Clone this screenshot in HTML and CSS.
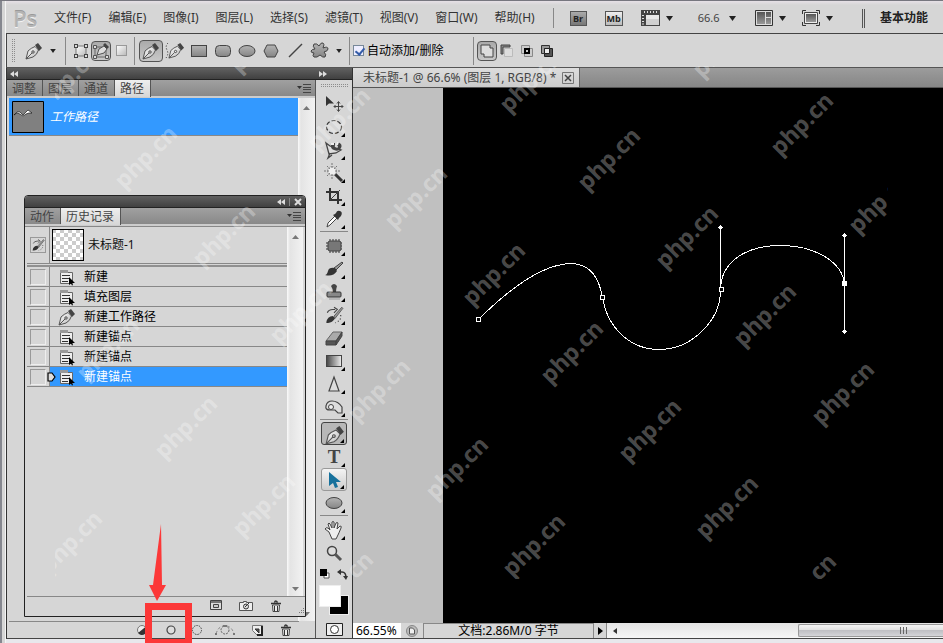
FILE: index.html
```html
<!DOCTYPE html>
<html lang="zh-CN">
<head>
<meta charset="utf-8">
<title>未标题-1</title>
<link rel="stylesheet" href="styles.css">
</head>
<body>
<svg class="defs" aria-hidden="true">
  <defs>
    <linearGradient id="g-fill" x1="0" y1="0" x2="0" y2="1"><stop offset="0" stop-color="#b4b4b4"/><stop offset="1" stop-color="#858585"/></linearGradient>
    <linearGradient id="g-light" x1="0" y1="0" x2="1" y2="1"><stop offset="0" stop-color="#fff"/><stop offset="1" stop-color="#b8b8b8"/></linearGradient>
    <linearGradient id="g-side"><stop offset="0" stop-color="#444"/><stop offset="1" stop-color="#eee"/></linearGradient>
    <linearGradient id="g-down" x1="0" y1="0" x2="0" y2="1"><stop offset="0" stop-color="#555"/><stop offset="1" stop-color="#999"/></linearGradient>
    <pattern id="checks" width="8" height="8" patternUnits="userSpaceOnUse"><rect width="8" height="8" fill="#fff"/><path d="M0 0h4v4H0zM4 4h4v4H4z" fill="#ccc"/></pattern>
    <symbol id="pen" viewBox="0 0 18 18">
      <path d="M1 17 3 9Q6 6 10 4.500l3.500 3.500Q12 13 8 15z" fill="url(#g-light)" stroke="#555"/>
      <path d="m10 3 3-2 4 5-3 3z" fill="#444"/><path d="m1 17 6-6" stroke="#555"/><circle cx="8" cy="10" r="1.200" fill="#eee" stroke="#444"/>
    </symbol>
    <symbol id="step" viewBox="0 0 18 18">
      <path d="M2.500 2.500h7v2h5v11h-12z" fill="#eee" stroke="#666"/><path d="M2 2h8v3H2z" fill="#999"/><path d="M4 7.500h8M4 10.500h8M4 13.500h6" stroke="#333"/>
      <path d="M11 9v8l2-1.500 1 2 1-.5-1-2h3z" fill="#000"/>
    </symbol>
    <symbol id="trash" viewBox="0 0 12 12"><path d="M2.500 5h7l-.5 6.500H3z" fill="#eee" stroke="#444"/><path d="M4.500 2.500q1-3 3 0M1 3.500h10" fill="none" stroke="#333" stroke-width="1.500"/><path d="M4.500 6v5M7.500 6v5" stroke="#333"/></symbol>
    <symbol id="panelmenu" viewBox="0 0 14 9"><path d="M0 2h5L2.500 5z" fill="#333"/><path d="M6 .5h8M6 3.500h8M6 5.500h8M6 8.500h8" stroke="#444"/></symbol>
    <symbol id="left2" viewBox="0 0 8 6"><path d="M4 0v6L0 3zM8 0v6L4 3z" fill="#ddd"/></symbol>
    <symbol id="right2" viewBox="0 0 8 6"><path d="M0 0v6l4-3zM4 0v6l4-3z" fill="#ddd"/></symbol>
    <symbol id="caret" viewBox="0 0 7 5"><path d="M0 0h7L3.500 5z" fill="#222"/></symbol>
    <symbol id="up" viewBox="0 0 7 4"><path d="M0 4h7L3.500 0z" fill="#777"/></symbol>
    <symbol id="brushhistory" viewBox="0 0 18 18"><path d="M3 7Q4 4 8 4h2M9 2l3 2-3 3" fill="none" stroke="#444"/><path d="M2 16q1-6 6-6l2 2q-3 5-8 4z" fill="#333"/><path d="m9 10 7-8 1 1-7 9z" fill="#999" stroke="#555" stroke-width=".8"/><path d="M15 9q1 5-5 7" fill="none" stroke="#333" stroke-dasharray="1 2"/></symbol>
  </defs>
</svg>

<div class="app">
  <header class="menubar">
    <strong class="logo">Ps</strong>
    <nav class="menus">
      <button>文件(F)</button><button>编辑(E)</button><button>图像(I)</button><button>图层(L)</button><button>选择(S)</button><button>滤镜(T)</button><button>视图(V)</button><button>窗口(W)</button><button>帮助(H)</button>
    </nav>
    <div class="appbar">
      <button class="badge bridge">Br</button>
      <button class="badge mini">Mb</button>
      <button class="drop" aria-label="查看额外内容"><svg width="19" height="16" viewBox="0 0 19 16"><path d="M0 0h19v16H0z" fill="#444"/><path d="M5 5h13v10H5z" fill="#d0d0d0"/><path d="M5 5h13v4H5z" fill="#e8e8e8"/><path d="M3.500 1v2M6.500 1v2M9.500 1v2M12.500 1v2M15.500 1v2M1 5.500h2M1 8.500h2M1 11.500h2M1 14h2" stroke="#ddd"/></svg><svg class="caret"><use href="#caret"/></svg></button>
      <button class="drop level">66.6 <svg class="caret"><use href="#caret"/></svg></button>
      <button class="drop near" aria-label="排列文档"><svg width="18" height="16" viewBox="0 0 18 16"><path d="M.5.5h17v15H.5z" fill="#ddd" stroke="#333"/><path d="M2 2h8v12H2zM11 2h5v5h-5zM11 8h5v6h-5z" fill="url(#g-down)"/></svg><svg class="caret"><use href="#caret"/></svg></button>
      <button class="drop" aria-label="屏幕模式"><svg width="18" height="16" viewBox="0 0 18 16"><path d="M.5 4V.5H4M14 .5h3.500V4M.5 12v3.500H4M14 15.500h3.500V12" fill="none" stroke="#333"/><path d="M2.500 2.500h13v11h-13z" fill="#eee" stroke="#444"/><path d="M4 4h10v8H4z" fill="url(#g-down)"/></svg><svg class="caret"><use href="#caret"/></svg></button>
    </div>
    <button class="workspace">基本功能</button>
  </header>

  <div class="options">
    <span class="grip tall"></span>
    <button class="preset" aria-label="钢笔工具预设"><svg width="18" height="18"><use href="#pen"/></svg><svg class="caret small"><use href="#caret"/></svg></button>
    <div class="group modes">
      <button aria-label="形状图层"><svg width="14" height="14" viewBox="0 0 14 14"><path d="M2 2h10v10H2z" fill="url(#g-light)" stroke="#777"/><path d="M0 0h4v4H0zM10 0h4v4h-4zM0 10h4v4H0zM10 10h4v4h-4z" fill="#444"/><path d="M1 1h2v2H1zM11 1h2v2h-2zM1 11h2v2H1zM11 11h2v2h-2z" fill="#ddd"/></svg></button>
      <button class="on" aria-label="路径"><svg width="16" height="16" viewBox="0 0 16 16"><path d="M2 4h11v10H2zM3 13 13 4" fill="none" stroke="#666"/><path d="M.5 2.500h3v3h-3zM.5 12.500h3v3h-3zM12.500 12.500h3v3h-3z" fill="#ddd" stroke="#555"/><path d="m4 12 2-6 5-3 3 3-3 4z" fill="#ddd" stroke="#555"/><path d="m10 2 2-2 4 4-2 2z" fill="#444"/></svg></button>
      <button aria-label="填充像素"><svg width="11" height="11"><rect x=".5" y=".5" width="10" height="10" fill="url(#g-light)" stroke="#999"/></svg></button>
    </div>
    <div class="group shapes">
      <button class="on" aria-label="钢笔"><svg width="18" height="18"><use href="#pen"/></svg></button>
      <button aria-label="自由钢笔"><svg width="20" height="18" viewBox="0 0 20 18"><path d="M3 1Q0 4 2 8T1 16" fill="none" stroke="#222" stroke-dasharray="1 2"/><svg x="3" width="17" height="17"><use href="#pen"/></svg></svg></button>
      <button aria-label="矩形"><svg width="16" height="14"><rect x=".5" y="1.500" width="15" height="11" fill="url(#g-fill)" stroke="#444"/></svg></button>
      <button aria-label="圆角矩形"><svg width="16" height="14"><rect x=".5" y="1.500" width="15" height="11" rx="4" fill="url(#g-fill)" stroke="#444"/></svg></button>
      <button aria-label="椭圆"><svg width="18" height="14"><ellipse cx="9" cy="7" rx="8" ry="5.500" fill="url(#g-fill)" stroke="#444"/></svg></button>
      <button aria-label="多边形"><svg width="16" height="14"><path d="M4 1h8l3 6-3 6H4L1 7z" fill="url(#g-fill)" stroke="#444"/></svg></button>
      <button aria-label="直线"><svg width="15" height="15"><path d="M1 14 14 1" stroke="#444" stroke-width="1.500"/></svg></button>
      <button aria-label="自定形状"><svg width="19" height="17"><path d="M4 2q3-1 5 2 2-4 4-3 2 1 0 5 5-2 5 1 0 2-4 3 3 3 1 5-2 1-5-2-3 3-6 2-2-1 0-4-3 0-3-2 1-2 4-2-3-3-1-5z" fill="url(#g-fill)" stroke="#444"/></svg></button>
      <svg class="caret small"><use href="#caret"/></svg>
    </div>
    <label class="auto"><input type="checkbox" checked>自动添加/删除</label>
    <div class="group modes areas">
      <button class="on" aria-label="添加到路径区域"><svg width="14" height="14"><path d="M1 1h9v3h3v9H4v-3H1z" fill="#ddd" stroke="#444"/></svg></button>
      <button aria-label="从路径区域减去"><svg width="14" height="14"><path d="M4.500 4.500h8v8h-8z" fill="#ddd" stroke="#bbb"/><path d="M1 1h9v2H3v7H1z" fill="#888" stroke="#444"/></svg></button>
      <button aria-label="交叉路径区域"><svg width="14" height="14"><path d="M1.500 1.500h8v8h-8zM4.500 4.500h8v8h-8z" fill="#ccc" stroke="#888"/><path d="M5 5h4v4H5z" fill="#ccc" stroke="#000" stroke-width="2"/></svg></button>
      <button aria-label="重叠路径区域除外"><svg width="14" height="14"><path d="M1.500 1.500h8v8h-8z" fill="#999" stroke="#333"/><path d="M4.500 4.500h8v8h-8z" fill="#555" stroke="#222"/><path d="M4.500 4.500h5v5h-5z" fill="#eee" stroke="#222"/></svg></button>
    </div>
  </div>

  <main class="work">
    <aside class="dock">
      <div class="dockbar"><svg class="dbl"><use href="#left2"/></svg></div>
      <div class="tabs"><button>调整</button><button>图层</button><button>通道</button><button class="on">路径</button><svg class="pm"><use href="#panelmenu"/></svg></div>
      <div class="body">
        <div class="list">
          <div class="pathrow"><svg width="32" height="32" viewBox="0 0 32 32"><path d="M.5.500h31v31H.5z" fill="#808080" stroke="#000"/><path d="m2 14 3-3 3 0 3 3 3-3 2-2 4 3-3 0-3 1-3 2-3-2-3-1z" fill="#fff" stroke="#000" stroke-width=".6"/></svg><em>工作路径</em></div>
        </div>
        <div class="scroll"><svg class="arrow"><use href="#up"/></svg><svg class="arrow flip"><use href="#up"/></svg></div>
      </div>
      <div class="foot pathfoot">
        <button aria-label="用前景色填充路径"><svg width="12" height="12"><circle cx="6" cy="6" r="4.500" fill="#eee" stroke="#777"/><path d="M10 2.500A5 5 0 1 1 2 9z" fill="#333"/></svg></button>
        <button aria-label="用画笔描边路径"><svg width="12" height="12"><circle cx="6" cy="6" r="4" fill="#ddd" stroke="#444" stroke-width="1.200"/></svg></button>
        <button aria-label="将路径作为选区载入"><svg width="12" height="12"><circle cx="6" cy="6" r="4.500" fill="none" stroke="#444" stroke-dasharray="1.500 1"/></svg></button>
        <button aria-label="从选区生成工作路径"><svg width="20" height="12"><circle cx="10" cy="6" r="4" fill="none" stroke="#666" stroke-dasharray="2 1"/><path d="M1 10Q3 3 8 2M12 2q5 1 7 8" fill="none" stroke="#888" stroke-dasharray="3 2"/><path d="M0 9h2v2H0zM18 9h2v2h-2zM8 1h4v2H8z" fill="#777"/></svg></button>
        <button aria-label="创建新路径"><svg width="11" height="11"><path d="M.5.500h10v10h-5l-5-5z" fill="#eee" stroke="#777"/><path d="M10 1v9H5" fill="none" stroke="#222" stroke-width="2"/><path d="M3 4h4v4z" fill="#555" stroke="#333"/></svg></button>
        <button aria-label="删除路径"><svg width="12" height="12"><use href="#trash"/></svg></button>
      </div>

      <section class="float">
        <div class="dockbar"><svg class="dbl"><use href="#left2"/></svg><i class="tick"></i><svg class="x" width="8" height="8" viewBox="0 0 8 8"><path d="m1 1 6 6M7 1 1 7" stroke="#ddd" stroke-width="2"/></svg></div>
        <div class="tabs"><button>动作</button><button class="on">历史记录</button><svg class="pm"><use href="#panelmenu"/></svg></div>
        <div class="body">
          <div class="list">
            <div class="snap"><span class="cell"><svg width="16" height="16" class="source"><use href="#brushhistory"/></svg></span><svg width="32" height="32"><rect x=".5" y=".5" width="31" height="31" fill="url(#checks)" stroke="#000"/></svg><span>未标题-1</span></div>
            <ol class="steps">
              <li><span class="cell"><i></i></span><svg><use href="#step"/></svg>新建</li>
              <li><span class="cell"><i></i></span><svg><use href="#step"/></svg>填充图层</li>
              <li><span class="cell"><i></i></span><svg><use href="#pen"/></svg>新建工作路径</li>
              <li><span class="cell"><i></i></span><svg><use href="#step"/></svg>新建锚点</li>
              <li><span class="cell"><i></i></span><svg><use href="#step"/></svg>新建锚点</li>
              <li class="now"><span class="cell"><i></i><svg class="marker" viewBox="0 0 9 10"><path d="M1 1h4l3 4-3 4H1z" fill="#ddd" stroke="#000" stroke-width="1.200"/></svg></span><svg><use href="#step"/></svg>新建锚点</li>
            </ol>
          </div>
          <div class="scroll"><svg class="arrow"><use href="#up"/></svg><svg class="arrow flip"><use href="#up"/></svg></div>
        </div>
        <div class="foot histfoot">
          <button aria-label="从当前状态创建新文档"><svg width="12" height="11"><path d="M.5.500h11v9H.5z" fill="#ddd" stroke="#444"/><path d="M1 2h10" stroke="#777" stroke-width="2"/><path d="M3.500 4.500h5v3h-5z" fill="#ccc" stroke="#444"/></svg></button>
          <button aria-label="创建新快照"><svg width="14" height="12"><path d="M.5 2.500h4v-1h3v1h6v8H.5z" fill="#eee" stroke="#555"/><circle cx="7" cy="6.500" r="2.500" fill="#ddd" stroke="#333"/><path d="m6 7 4-4" stroke="#333"/></svg></button>
          <button aria-label="删除当前状态"><svg width="12" height="12"><use href="#trash"/></svg></button>
          <svg class="resize" width="10" height="10"><path d="M8.500 0v10M6.500 3v7M4.500 5v5M2.500 7v3M.5 9v1" stroke="#777" stroke-dasharray="1 1"/></svg>
        </div>
      </section>

      <svg class="pointer" width="48" height="124" viewBox="0 0 48 124" aria-hidden="true"><path d="M16 1 17 62h4L12 78 4 62h4z" fill="#fc3838"/><path d="M3.500 83.500h40v36h-40z" fill="none" stroke="#fc3838" stroke-width="7"/></svg>
    </aside>

    <aside class="toolbox">
      <div class="dockbar"><svg class="dbl"><use href="#right2"/></svg></div>
      <span class="grip wide"></span>
      <div class="tools">
        <button class="plain" aria-label="移动"><svg viewBox="0 0 20 20"><path d="M2 2v10l3-2.500 5 0z" fill="#333"/><path d="M14.500 8v9M10 12.500h9M13 9.500l1.500-2 1.500 2M13 15.500l1.500 2 1.500-2M11.500 11 10 12.500l1.500 1.500M17.500 11l1.500 1.500-1.500 1.500" fill="none" stroke="#444"/></svg></button>
        <button aria-label="椭圆选框"><svg viewBox="0 0 20 20"><ellipse cx="10" cy="10" rx="7.500" ry="6.500" fill="none" stroke="#333" stroke-width="1.200" stroke-dasharray="4 2"/></svg></button>
        <button aria-label="磁性套索"><svg viewBox="0 0 20 20"><path d="m2 3 4 3 11 4-5 3-7 1zM6 13l-2 5 4-3" fill="#ddd" stroke="#444" stroke-width="1.300"/><path d="M7 3h4v2q-1 3 2 3 2-1 0-3l1-3q5 2 3 6-2 4-7 2-4-1-3-7z" fill="#444"/><path d="M7 3h3v2H7zM13 2h2l-1 3h-2z" fill="#eee"/></svg></button>
        <button aria-label="魔棒"><svg viewBox="0 0 20 20"><path d="m11 11 7 7" stroke="#333" stroke-width="3"/><circle cx="8" cy="8" r="4.500" fill="#eee" stroke="#aaa"/><path d="M8 0v5M8 11v5M0 8h5M11 8h5M3 3l3 3M13 3l-3 3M3 13l3-3" stroke="#777" stroke-dasharray="2 1"/></svg></button>
        <button aria-label="裁剪"><svg viewBox="0 0 20 20"><path d="M6 2v12h12M2 6h12v12" fill="none" stroke="#333" stroke-width="2"/><path d="M6 14 16 4" stroke="#444"/></svg></button>
        <button aria-label="吸管"><svg viewBox="0 0 20 20"><path d="m3 18 1-4 7-7 2 2-7 7z" fill="#fff" stroke="#444"/><path d="m9 6 5 5 1-2 2-2q2-4-1-5t-4 2l-1 1z" fill="#333"/></svg></button>
        <hr>
        <button aria-label="修复画笔"><svg viewBox="0 0 20 20"><path d="M6 3v14M9 3v14M12 3v14M15 3v14M2 7h16M2 10h16M2 13h16" stroke="#333"/><rect x="4" y="5" width="13" height="10" rx="2" fill="#777" stroke="#444"/></svg></button>
        <button aria-label="画笔"><svg viewBox="0 0 20 20"><path d="m10 9 8-6 1 1-7 7z" fill="#999" stroke="#444"/><path d="M1 16q2 0 3-4t7-3l2 3q-4 6-12 4z" fill="#333"/></svg></button>
        <button aria-label="仿制图章"><svg viewBox="0 0 20 20"><path d="M7 4q3-4 6 0-1 3-1 6H9q0-3-2-6z" fill="#444"/><rect x="3" y="10" width="14" height="5" rx="1" fill="#888" stroke="#333"/><path d="M5 17h11" stroke="#999"/></svg></button>
        <button aria-label="历史记录画笔"><svg viewBox="0 0 18 18"><use href="#brushhistory"/></svg></button>
        <button aria-label="橡皮擦"><svg viewBox="0 0 20 20"><path d="m2 13 7-9h9l-6 9z" fill="#aaa" stroke="#666"/><path d="M2 13h10v4H2zM12 13l6-9v4l-6 9z" fill="#555" stroke="#444"/></svg></button>
        <button aria-label="渐变"><svg viewBox="0 0 20 20"><rect x="2.500" y="4.500" width="15" height="11" fill="url(#g-side)" stroke="#444"/></svg></button>
        <button aria-label="锐化"><svg viewBox="0 0 20 20"><path d="m10 3 5 14H5z" fill="#ddd" stroke="#444" stroke-width="1.200"/></svg></button>
        <button aria-label="海绵"><svg viewBox="0 0 20 20"><path d="M2 9q1-5 6-5 6 0 10 6l0 6h-4l-3-3H6q-5 0-4-4z" fill="#ddd" stroke="#444" stroke-width="1.200"/><circle cx="7" cy="10" r="2.500" fill="#eee" stroke="#444"/></svg></button>
        <hr>
        <button class="pressed" aria-label="钢笔"><svg viewBox="0 0 20 20"><svg x="1" y="1" width="18" height="18"><use href="#pen"/></svg></svg></button>
        <button class="type">T</button>
        <button class="hover" aria-label="直接选择"><svg viewBox="0 0 20 20"><path d="M5 2v14l4-3 2 5 3-1-2-5h5z" fill="#17719c"/></svg></button>
        <button aria-label="椭圆"><svg viewBox="0 0 20 20"><ellipse cx="10" cy="10" rx="8" ry="5.500" fill="url(#g-fill)" stroke="#444"/></svg></button>
        <hr>
        <button aria-label="抓手"><svg viewBox="0 0 20 20"><path d="M5 12 1 9q1-2 3-1l2 2L4 4q1-2 2 0l2 4V2q1-1 2 0v6l2-5q1-1 2 0l-1 6 3-3q2 0 1 2-2 5-4 9l-1 2H8z" fill="#eee" stroke="#444"/></svg></button>
        <button class="plain" aria-label="缩放"><svg viewBox="0 0 20 20"><circle cx="8" cy="8" r="4.500" fill="#ddd" stroke="#444" stroke-width="1.500"/><path d="m11 11 6 6" stroke="#555" stroke-width="3"/></svg></button>
      </div>
      <div class="mini-colors"><svg width="10" height="10"><path d="M4 4h5v5H4z" fill="#fff" stroke="#555"/><path d="M0 0h7v7H0z" fill="#000"/></svg><svg width="11" height="11" viewBox="0 0 11 11"><path d="M2 3h3q4 0 4 6" fill="none" stroke="#333" stroke-width="1.500"/><path d="M4 0v6L0 3zM6 7h5l-2 4z" fill="#333"/></svg></div>
      <div class="swatches"><i class="back"></i><i class="front"></i></div>
      <button class="mask" aria-label="快速蒙版"><svg width="17" height="13"><path d="M.5.5h16v12H.5z" fill="#eee" stroke="#222"/><circle cx="8.500" cy="6.500" r="4" fill="#fff" stroke="#333"/></svg></button>
    </aside>

    <section class="document">
      <div class="doctabs"><div class="doctab">未标题-1 @ 66.6% (图层 1, RGB/8) *<button aria-label="关闭"><svg width="12" height="12"><path d="M.5.5h11v11H.5z" fill="none" stroke="#777"/><path d="m3 3 6 6M9 3 3 9" stroke="#444" stroke-width="1.500"/></svg></button></div></div>
      <div class="canvas">
        <svg width="500" height="536" viewBox="443 88 500 536" shape-rendering="crispEdges">
          <g fill="none" stroke="#fff"><path d="M478.500 319.500C518 280 548 264 571 263.500 591 264 599 278 602.500 297.500 608 330 632 349.500 659 349.500 692 349.500 721 320 720.500 289.500 721 262 745 245.500 781 245.500 815 245.500 842 262 844.500 283.500"/><path d="M720.500 228v61M844.500 236v95"/></g>
          <g fill="#000" stroke="#fff"><path d="M476.500 317.500h4v4h-4zM600.500 295.500h4v4h-4zM719.500 287.500h4v4h-4z"/></g>
          <path d="M842 281h5v5h-5zM718 227h5v1h-5zM719 226h3v3h-3zM720 225h1v5h-1zM842 235h5v1h-5zM843 234h3v3h-3zM844 233h1v5h-1zM842 331h5v1h-5zM843 330h3v3h-3zM844 329h1v5h-1z" fill="#fff"/>
        </svg>
      </div>
      <footer class="status">
        <input class="zoom" value="66.55%" aria-label="缩放级别">
        <button class="info" aria-label="文档信息"><svg width="12" height="12"><circle cx="6" cy="6" r="5.500" fill="#bbb" stroke="#888"/><path d="M3.500 3h3l2 2v4h-5z" fill="#eee" stroke="#555"/></svg></button>
        <span class="size">文档:2.86M/0 字节</span>
        <button class="more" aria-label="更多"><svg width="5" height="8"><path d="M0 0v8l5-4z"/></svg></button>
        <div class="hscroll"><svg width="4" height="6"><path d="M4 0v6L0 3z" fill="#333"/></svg><span class="thumb"><i></i></span></div>
      </footer>
    </section>
  </main>
</div>

<svg class="marks" width="943" height="643" aria-hidden="true">
  <defs><clipPath id="bounds"><rect x="55" y="66" width="833" height="513"/></clipPath></defs>
  <g clip-path="url(#bounds)">
    <text transform="translate(69 80) rotate(-45)">php.cn</text><text transform="translate(147 158) rotate(-45)">php.cn</text><text transform="translate(225 236) rotate(-45)">php.cn</text><text transform="translate(302 313) rotate(-45)">php.cn</text><text transform="translate(380 391) rotate(-45)">php.cn</text><text transform="translate(458 469) rotate(-45)">php.cn</text><text transform="translate(535 546) rotate(-45)">php.cn</text>
    <text transform="translate(262 42) rotate(-45)">php.cn</text><text transform="translate(340 120) rotate(-45)">php.cn</text><text transform="translate(417 198) rotate(-45)">php.cn</text><text transform="translate(495 275) rotate(-45)">php.cn</text><text transform="translate(573 353) rotate(-45)">php.cn</text><text transform="translate(651 431) rotate(-45)">php.cn</text><text transform="translate(728 508) rotate(-45)">php.cn</text><text transform="translate(806 586) rotate(-45)">php.cn</text>
    <text transform="translate(532 82) rotate(-45)">php.cn</text><text transform="translate(610 160) rotate(-45)">php.cn</text><text transform="translate(688 238) rotate(-45)">php.cn</text><text transform="translate(766 316) rotate(-45)">php.cn</text><text transform="translate(844 394) rotate(-45)">php.cn</text>
    <text transform="translate(725 47) rotate(-45)">php.cn</text><text transform="translate(803 125) rotate(-45)">php.cn</text><text transform="translate(881 203) rotate(-45)">php.cn</text>
    <text transform="translate(109 350) rotate(-45)">php.cn</text><text transform="translate(187 428) rotate(-45)">php.cn</text><text transform="translate(265 506) rotate(-45)">php.cn</text><text transform="translate(343 584) rotate(-45)">php.cn</text>
    <text transform="translate(72 543) rotate(-45)">php.cn</text>
  </g>
</svg>
</body>
</html>
```
FILE: styles.css
```css
* { box-sizing: border-box; }
body {
  margin: 0;
  background: #d6d6d6;
  color: #222;
  font: 12px/16px "Noto Sans", "Noto Sans CJK SC", sans-serif;
  overflow: hidden;
}
button, input { font: inherit; color: inherit; margin: 0; padding: 0; border: 0; background: none; }
svg { display: block; flex: none; }
.defs { position: absolute; width: 0; height: 0; }
.app {
  display: flex;
  flex-direction: column;
  height: 100vh;
  padding: 0 0 4px 6px;
  border-top: 1px solid #77777f;
  background: linear-gradient(90deg, #85878f 0, #85878f 2px, #d6d6d6 2px, #d6d6d6 5px, #f4f4f4 5px, #f4f4f4 6px, #e8e8ec 6px);
}

/* Menu bar */
.menubar {
  display: flex;
  align-items: center;
  height: 33px;
  flex: none;
  padding-top: 2px;
  background: linear-gradient(#e6e0e6, #d6d6d6 4px);
  border-bottom: 1px solid #444;
}
.logo { width: 39px; padding-left: 7px; font: 600 22px/24px "Open Sans", sans-serif; color: #b4b4b4; text-shadow: 0 1px #f4f4f4, 0 -1px #999; }
.menus { display: flex; gap: 17px; padding-left: 9px; color: #333; }
.appbar { display: flex; align-items: center; margin-left: 18px; padding-left: 16px; height: 20px; border-left: 1px solid #888; }
.badge { width: 17px; height: 15px; border: 1px solid #555; font: bold 9px/13px "Open Sans", sans-serif; text-align: center; }
.bridge { background: linear-gradient(#aaa, #777); margin-right: 18px; }
.mini { width: 18px; background: linear-gradient(#eee, #bbb); margin-right: 18px; }
.drop { display: flex; align-items: center; gap: 6px; margin-right: 25px; }
.level { gap: 10px; font-size: 11px; color: #444; margin-right: 19px; }
.near { margin-right: 16px; }
.drop + .drop:last-child { margin-right: 0; }
.caret { width: 7px; height: 5px; }
.caret.small { width: 6px; height: 4px; }
.workspace { margin: 0 15px 0 auto; padding-left: 15px; height: 19px; border-left: 3px double #555; font-weight: bold; white-space: nowrap; }

/* Options bar */
.options {
  display: flex;
  align-items: center;
  height: 34px;
  flex: none;
  background: #d6d6d6;
  border-left: 1px solid #444;
  border-bottom: 1px solid #555;
}
.grip { background: conic-gradient(#8c8c8c 25%, transparent 0) 0 0 / 2px 2px; }
.grip.tall { width: 4px; height: 24px; margin-left: 4px; }
.preset { display: flex; align-items: center; gap: 7px; padding: 0 9px 0 10px; }
.group { display: flex; align-items: center; height: 28px; border-left: 1px solid #888; }
.group button { display: flex; align-items: center; justify-content: center; width: 20px; height: 20px; border-radius: 4px; }
.modes { padding: 0 3px 0 5px; width: 69px; }
.shapes { padding: 0 7px 0 4px; }
.group.shapes button { width: 24px; height: 22px; }
.group button.on { border: 1px solid #555; background: linear-gradient(#aaa, #c8c8c8); }
.shapes .caret { margin-left: 5px; }
.auto { display: flex; align-items: center; gap: 3px; width: 124px; height: 28px; padding-left: 3px; border-left: 1px solid #888; color: #000; }
.auto input { appearance: none; width: 11px; height: 11px; border: 1px solid #789; background: #eef; position: relative; }
.auto input:checked::after { content: ""; position: absolute; left: 3px; top: 0; width: 4px; height: 7px; border: solid #345ca8; border-width: 0 2px 2px 0; transform: rotate(40deg); }
.modes.areas { width: auto; padding-left: 3px; }

/* Panels */
.work { display: flex; flex: 1; min-height: 0; border-left: 1px solid #333; border-bottom: 1px solid #444; }
.dock { position: relative; display: flex; flex-direction: column; width: 309px; flex: none; background: #d6d6d6; border-right: 1px solid #555; }
.dockbar { display: flex; align-items: center; height: 12px; flex: none; padding: 0 3px; background: linear-gradient(#606060, #404040); border-bottom: 1px solid #222; }
.dock > .dockbar { margin-right: -1px; }
.dbl { width: 8px; height: 6px; }
.tabs { display: flex; height: 18px; flex: none; background: linear-gradient(#a0a0a0, #888); border-bottom: 2px solid #ccc; }
.tabs button { padding: 0 6px 0 5px; border-right: 1px solid #555; color: #444; line-height: 17px; white-space: nowrap; }
.dock > .tabs button { width: 36px; }
.tabs .on { background: linear-gradient(#eee, #d6d6d6); margin-bottom: -1px; }
.pm { width: 14px; height: 9px; margin: 4px 4px 0 auto; }
.body { display: flex; flex: 1; min-height: 0; }
.list { flex: 1; min-width: 0; }
.dock > .body { padding-left: 2px; }
.pathrow { display: flex; align-items: center; gap: 6px; height: 38px; padding-left: 3px; background: #39f; color: #fff; border-bottom: 1px solid #888; }
.scroll { display: flex; flex-direction: column; justify-content: space-between; align-items: center; width: 16px; padding: 8px 0 5px; background: linear-gradient(90deg, #fafafa, #e4e4e4 3px, #f2f2f2); }
.dock > .body > .scroll { width: 17px; }
.arrow { width: 7px; height: 4px; }
.flip { transform: scaleY(-1); }
.foot { display: flex; align-items: center; flex: none; margin-left: 2px; border-top: 1px solid #888; }
.pathfoot { height: 17px; gap: 17px; padding-left: 127px; margin-right: 16px; }
.pathfoot button:nth-child(3) { margin-left: -3px; }
.pathfoot button:nth-child(4) { margin-left: -5px; }

.float { position: absolute; left: 17px; top: 127px; width: 282px; height: 422px; display: flex; flex-direction: column; background: #d6d6d6; border: 1px solid #222; border-radius: 4px 4px 0 0; overflow: hidden; }
.float .dockbar { justify-content: flex-end; gap: 4px; }
.tick { width: 1px; height: 8px; background: #888; }
.float .body { padding: 0 2px; border-top: 1px solid #888; }
.snap { display: flex; align-items: center; gap: 4px; height: 37px; border-bottom: 1px solid #888; color: #111; }
.cell { position: relative; display: flex; align-items: center; justify-content: center; align-self: stretch; width: 23px; flex: none; border-right: 1px solid #888; }
.snap .cell { margin-right: -2px; }
.source { border: 1px solid #999; }
.cell i { width: 16px; height: 16px; border: 1px solid; border-color: #999 #eee #eee #999; }
.steps { list-style: none; margin: 1px 0 0; padding: 0; border-top: 2px solid #909090; color: #000; }
.steps li { display: flex; align-items: center; height: 20px; border-bottom: 1px solid #888; }
.steps li > svg { width: 18px; height: 18px; margin: 0 8px; }
.steps .now { background: linear-gradient(90deg, #d6d6d6 23px, #39f 23px); color: #fff; }
.marker { position: absolute; left: 20px; top: 5px; width: 9px; height: 10px; }
.histfoot { height: 20px; gap: 17px; padding: 0 4px 2px 183px; }
.histfoot .resize { margin: 4px 0 0 auto; }
.pointer { position: absolute; left: 138px; top: 455px; z-index: 2; }

/* Tool palette */
.toolbox { display: flex; flex-direction: column; align-items: center; width: 37px; flex: none; background: #d6d6d6; border-right: 1px solid #333; }
.toolbox .dockbar { align-self: stretch; }
.grip.wide { width: 28px; height: 4px; margin: 4px 0; }
.tools { display: flex; flex-direction: column; align-items: center; }
.tools button { position: relative; display: flex; align-items: center; justify-content: center; width: 26px; height: 23px; }
.tools button svg { width: 20px; height: 20px; }
.tools button::after { content: ""; position: absolute; right: 2px; bottom: 1px; border: solid; border-width: 0 0 4px 4px; border-color: transparent transparent #000; }
.tools .plain::after { display: none; }
.tools hr { width: 28px; height: 1px; margin: 1px 0 2px; border: 0; background: #888; }
.tools .pressed { background: #b8b8b8; border: 1px solid #444; border-radius: 3px; }
.tools .hover { background: linear-gradient(#f4f4f4, #ccc); border: 1px solid #999; border-radius: 3px; }
.tools .type { font: bold 19px/22px "Liberation Serif", serif; color: #444; }
.mini-colors { display: flex; justify-content: space-between; width: 28px; padding-top: 5px; }
.swatches { display: grid; width: 30px; height: 30px; margin-top: 5px; }
.swatches i { grid-area: 1 / 1; border: 1px solid #eee; }
.front { width: 22px; height: 22px; background: #fff; }
.back { width: 20px; height: 20px; background: #000; place-self: end; }
.mask { margin-top: 8px; }

/* Document window */
.document { display: flex; flex-direction: column; flex: 1; min-width: 0; }
.doctabs { display: flex; height: 20px; flex: none; background: linear-gradient(#9c9c9c, #868686); border-bottom: 1px solid #555; }
.doctab { display: flex; align-items: center; gap: 6px; padding: 1px 5px 0 10px; background: linear-gradient(#ddd, #ccc); border-right: 1px solid #666; color: #444; white-space: nowrap; }
.canvas { flex: 1; min-height: 0; overflow: hidden; background: linear-gradient(90deg, #c0c0c0 90px, #000 90px); padding-left: 90px; }
.status { display: flex; height: 15px; flex: none; background: #d6d6d6; color: #000; line-height: 15px; }
.zoom { width: 48px; flex: none; padding-left: 3px; background: #fff; }
.info { width: 22px; flex: none; display: flex; align-items: center; justify-content: center; }
.size { width: 171px; border: solid #888; border-width: 1px 1px 0; text-align: center; line-height: 14px; }
.more { width: 13px; display: flex; align-items: center; justify-content: center; border-right: 1px solid #888; }
.hscroll { display: flex; align-items: center; flex: 1; padding-left: 6px; background: linear-gradient(#e4e4e4, #f6f6f6); }
.thumb { display: flex; align-items: center; justify-content: center; flex: 0 0 44%; padding-left: 67px; height: 13px; margin-left: auto; border: 1px solid #999; border-right: 0; border-radius: 2px 0 0 2px; background: linear-gradient(#f4f4f4, #e0e0e0 50%, #c0c0c4 50%, #d4d4d8); }
.thumb i { width: 8px; height: 7px; background: repeating-linear-gradient(90deg, #666 0, #666 1px, transparent 1px, transparent 3px); }

.marks { position: absolute; left: 0; top: 0; pointer-events: none; z-index: 5; }
.marks text { font: 700 23px "Noto Sans", sans-serif; fill: #fff; fill-opacity: .3; text-anchor: middle; dominant-baseline: middle; }
```
